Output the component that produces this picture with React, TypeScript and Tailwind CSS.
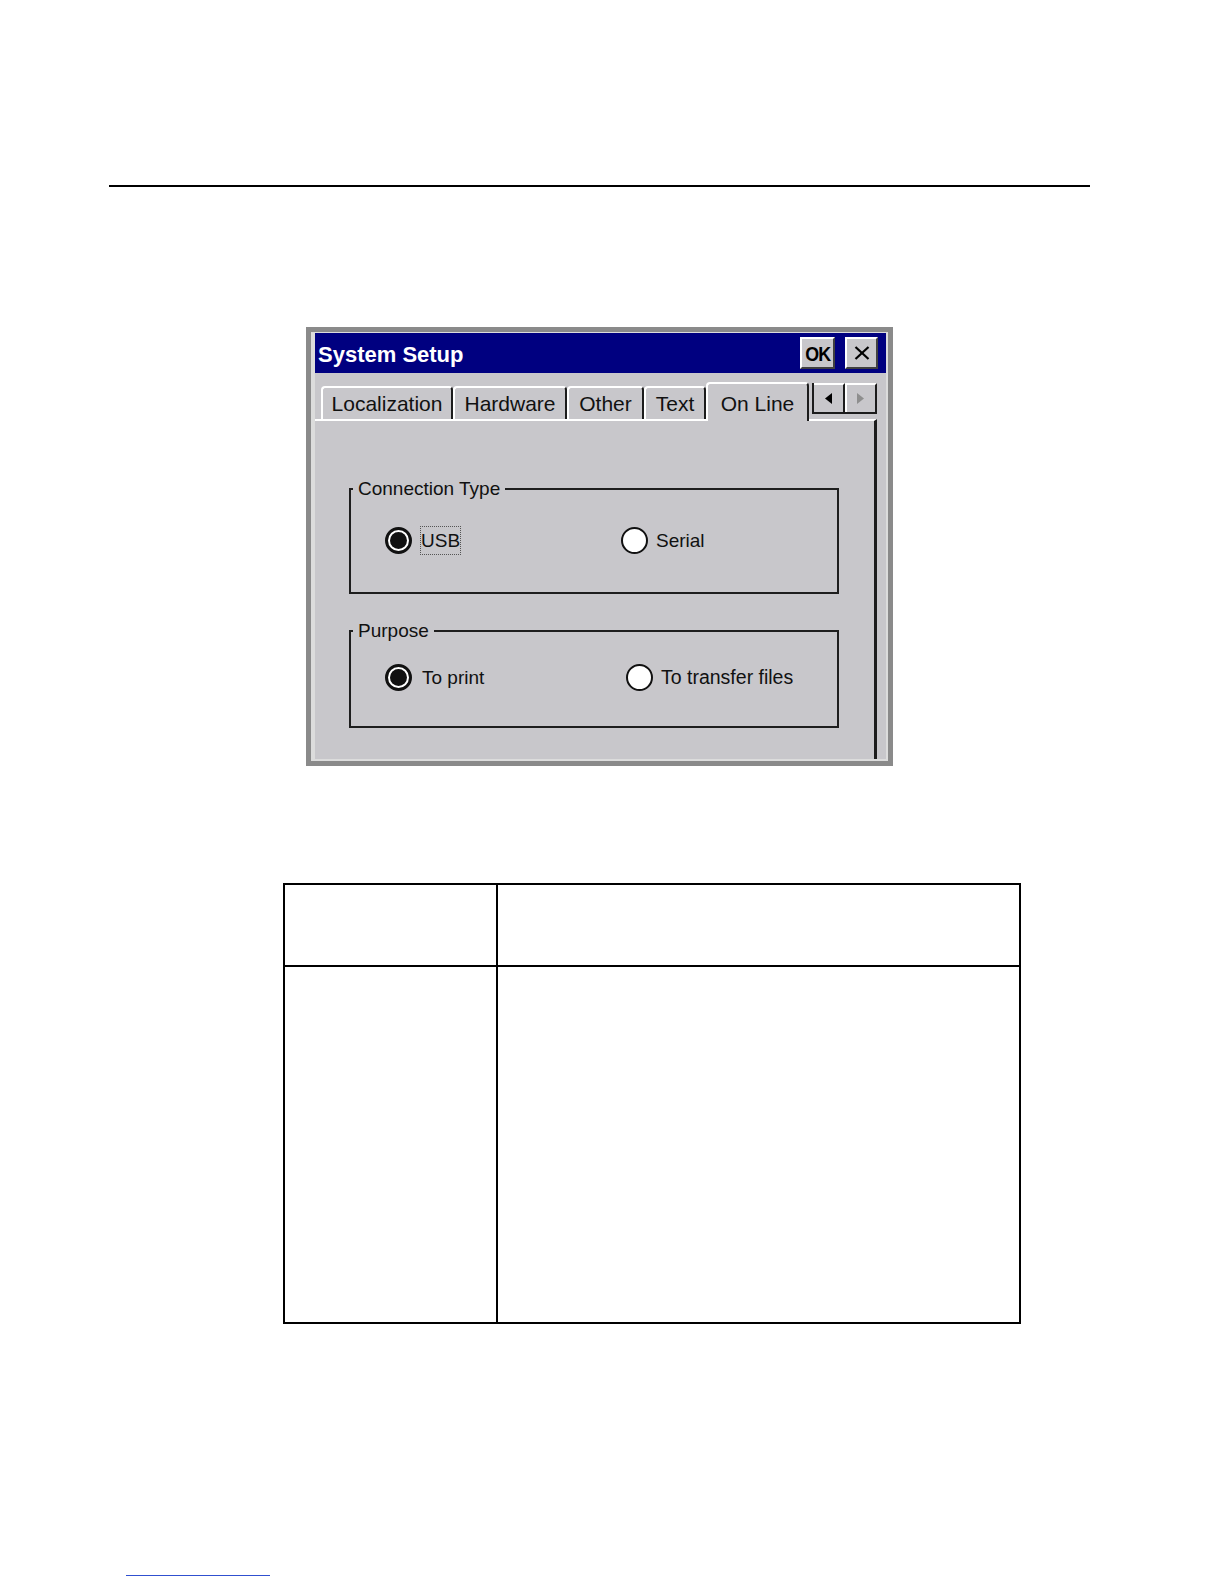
import React from 'react';

const FONT = "font-['Liberation_Sans',Arial,sans-serif]";

const Radio: React.FC<{ checked?: boolean }> = ({ checked }) => (
  <span
    className={
      checked
        ? 'w-[27px] h-[27px] shrink-0 rounded-full border-[3px] border-[#111] bg-white flex items-center justify-center'
        : 'w-[27px] h-[27px] shrink-0 rounded-full border-[2.5px] border-[#111] bg-white flex items-center justify-center'
    }
  >
    {checked && <span className="w-[17px] h-[17px] rounded-full bg-[#111]" />}
  </span>
);

const tabs = [
  { label: 'Localization', w: 'w-[132px]' },
  { label: 'Hardware', w: 'w-[114px]' },
  { label: 'Other', w: 'w-[77px]' },
  { label: 'Text', w: 'w-[62px]' },
  { label: 'On Line', w: 'w-[103px]', selected: true },
];

const Tab: React.FC<{ label: string; w: string; selected?: boolean }> = ({ label, w, selected }) => (
  <div
    className={
      selected
        ? `${w} relative z-10 h-[39px] -mb-[2px] pb-[5px] flex items-end justify-center bg-[#c8c7cb] border-t-2 border-l-2 border-white border-r-2 border-r-[#1c1c1c] rounded-t-[4px]`
        : `${w} h-[33px] pb-[3px] flex items-end justify-center border-t-2 border-l-2 border-white border-r-2 border-r-[#1c1c1c] rounded-t-[4px]`
    }
  >
    <span className="text-[21px] leading-[24px] text-[#111] whitespace-nowrap">{label}</span>
  </div>
);

const Group: React.FC<{ legend: string; h: string; children: React.ReactNode }> = ({ legend, h, children }) => (
  <div className={`relative w-[490px] ${h} border-2 border-[#1e1e1e]`}>
    <span className="absolute left-[2px] -top-[12px] px-[5px] bg-[#c8c7cb] text-[19px] leading-[22px] text-[#111] whitespace-nowrap">
      {legend}
    </span>
    {children}
  </div>
);

const SystemSetup: React.FC = () => (
  <div className="ml-[306px] mt-[140px] w-[587px] h-[439px] border-[5px] border-[#8a8a8a] bg-[#dcdcdc] pl-[4px] pt-[1px] pr-[2px] pb-[2px] flex flex-col">
    {/* title bar */}
    <div className="h-[40px] shrink-0 bg-[#000080] flex items-center pl-[3px] pr-[8px]">
      <span className="flex-1 mt-[4px] text-white font-bold text-[22px] leading-[26px] whitespace-nowrap">System Setup</span>
      <div className="w-[35px] h-[32px] bg-[#c8c7cb] border-2 border-white border-b-[#404040] border-r-[#404040] flex items-center justify-center">
        <span className="text-[21px] leading-none font-bold text-black scale-x-[0.85] tracking-[-1px]">OK</span>
      </div>
      <div className="ml-[10px] w-[33px] h-[32px] bg-[#c8c7cb] border-2 border-white border-b-[#404040] border-r-[#404040] flex items-center justify-center">
        <svg width="16" height="14" viewBox="0 0 16 14">
          <line x1="1.5" y1="1" x2="14.5" y2="13" stroke="#000" strokeWidth="2.2" />
          <line x1="14.5" y1="1" x2="1.5" y2="13" stroke="#000" strokeWidth="2.2" />
        </svg>
      </div>
    </div>

    {/* body */}
    <div className="flex-1 bg-[#c8c7cb] flex flex-col pr-[9px]">
      <div className="h-[46px] shrink-0 flex items-end pl-[6px]">
        {tabs.map((t) => (
          <Tab key={t.label} {...t} />
        ))}
        <div className="ml-[3px] mb-[5px] flex h-[31px] w-[65px] border-l-2 border-b-2 border-[#1c1c1c]">
          <div className="flex-1 border-t-2 border-white border-r-2 border-r-[#1c1c1c] flex items-center justify-center">
            <svg width="7" height="11" viewBox="0 0 7 11">
              <polygon points="7,0 0,5.5 7,11" fill="#000" />
            </svg>
          </div>
          <div className="flex-1 border-t-2 border-l-2 border-white border-r-2 border-r-[#1c1c1c] flex items-center justify-center">
            <svg width="7" height="11" viewBox="0 0 7 11">
              <polygon points="0,0 7,5.5 0,11" fill="#8e8e8e" />
            </svg>
          </div>
        </div>
      </div>

      <div className="flex-1 border-t-2 border-white border-r-[3px] border-r-[#1c1c1c] pl-[34px] pt-[67px] flex flex-col gap-[36px]">
        <Group legend="Connection Type" h="h-[106px]">
          <div className="flex items-center h-[28px] mt-[36px] pl-[34px]">
            <div className="flex items-center w-[236px]">
              <Radio checked />
              <span className="ml-[8px] border border-dotted border-[#555] py-[2px] text-[19px] leading-[23px] text-[#111]">USB</span>
            </div>
            <div className="flex items-center">
              <Radio />
              <span className="ml-[8px] text-[19px] leading-[23px] text-[#111]">Serial</span>
            </div>
          </div>
        </Group>
        <Group legend="Purpose" h="h-[98px]">
          <div className="flex items-center h-[28px] mt-[31px] pl-[34px]">
            <div className="flex items-center w-[241px]">
              <Radio checked />
              <span className="ml-[10px] text-[19px] leading-[23px] text-[#111]">To print</span>
            </div>
            <div className="flex items-center">
              <Radio />
              <span className="ml-[8px] text-[19.5px] leading-[23px] text-[#111] whitespace-nowrap">To transfer files</span>
            </div>
          </div>
        </Group>
      </div>
    </div>
  </div>
);

export default function App() {
  return (
    <div className={`${FONT} w-[1224px] min-h-[1584px] bg-white flex flex-col items-start pt-[185px]`}>
      <div className="ml-[109px] w-[981px] h-[2px] bg-black" />

      <SystemSetup />

      <div className="ml-[283px] mt-[117px] w-[738px] h-[441px] border-2 border-black grid grid-cols-[213px_1fr] grid-rows-[82px_1fr]">
        <div className="border-r-2 border-b-2 border-black" />
        <div className="border-b-2 border-black" />
        <div className="border-r-2 border-black" />
        <div />
      </div>

      <div className="ml-[126px] mt-[251px] w-[144px] h-px bg-[#3050d0]" />
    </div>
  );
}
